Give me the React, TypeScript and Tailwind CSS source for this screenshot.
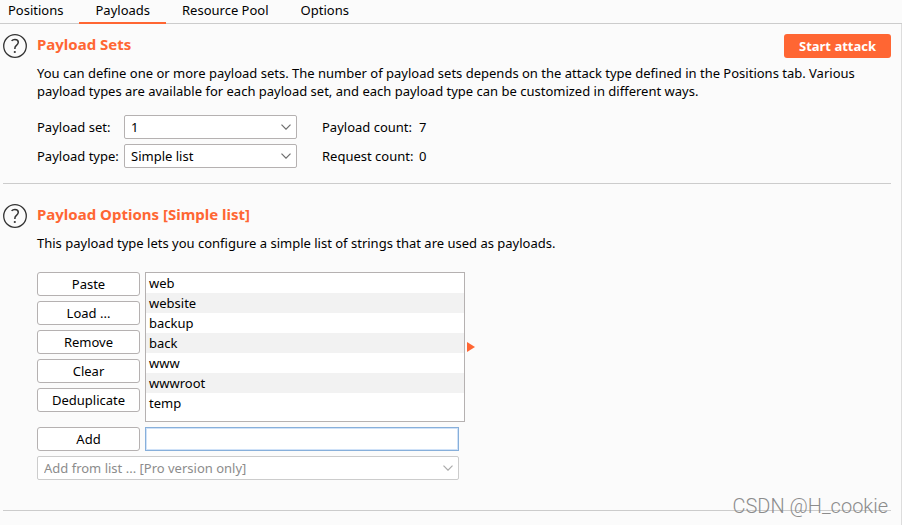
import { useState } from "react";
import type { ReactNode } from "react";

const tabs = ["Positions", "Payloads", "Resource Pool", "Options"];
const initialItems = ["web", "website", "backup", "back", "www", "wwwroot", "temp"];

function HelpButton({ label }: { label: string }) {
  return (
    <button type="button" aria-label={label} className="h-6 w-6 shrink-0">
      <svg viewBox="0 0 24 24" className="h-6 w-6" fill="none" stroke="#333333">
        <circle cx="12" cy="12" r="11.3" strokeWidth="1.3" />
        <path
          d="M8.6 6.9c.8-1 2-1.5 3.3-1.5 2 0 3.4 1.1 3.4 2.9 0 1.4-.7 2.1-1.8 3-1 .8-1.6 1.5-1.6 2.8v.9"
          strokeWidth="1.5"
        />
        <circle cx="11.8" cy="18" r="1.1" fill="#333333" stroke="none" />
      </svg>
    </button>
  );
}

interface SelectBoxProps {
  id?: string;
  label?: string;
  options: string[];
  disabled?: boolean;
}

function SelectBox({ id, label, options, disabled }: SelectBoxProps) {
  return (
    <div className="relative w-full">
      <select
        id={id}
        aria-label={label}
        disabled={disabled}
        className={`block h-6 w-full appearance-none rounded-xs border bg-white pl-1.5 pr-6 leading-5 ${
          disabled ? "border-[#cccccc] text-[#8c8c8c] opacity-100" : "border-[#b5b1b1] text-black"
        }`}
      >
        {options.map((option) => (
          <option key={option}>{option}</option>
        ))}
      </select>
      <svg
        viewBox="0 0 10 6"
        className="pointer-events-none absolute right-1.5 top-[9px] h-1.5 w-2.5"
        fill="none"
        stroke={disabled ? "#aaaaaa" : "#6e6e6e"}
        strokeWidth="1.2"
      >
        <path d="M0.5 0.7L5 5.2l4.5-4.5" />
      </svg>
    </div>
  );
}

function ListButton({ children }: { children: ReactNode }) {
  return (
    <button
      type="button"
      className="h-6 w-full rounded-[3px] border border-[#b5b1b1] bg-white leading-5 hover:bg-gray-50"
    >
      {children}
    </button>
  );
}

export default function App() {
  const [activeTab, setActiveTab] = useState("Payloads");
  const [newItem, setNewItem] = useState("");

  return (
    <div className="relative min-h-screen bg-[#fbfbfb] font-['Noto_Sans','Open_Sans',sans-serif] text-[13px] leading-[18px] text-black">
      <nav className="flex h-6 border-b border-[#cccccc]">
        {tabs.map((tab) => (
          <button
            key={tab}
            type="button"
            onClick={() => setActiveTab(tab)}
            className={`-mb-px h-6 border-b-2 px-4 pb-0.5 first:pl-2 ${
              activeTab === tab ? "border-[#ff6633]" : "border-transparent"
            }`}
          >
            {tab}
          </button>
        ))}
      </nav>

      <main className="min-h-[calc(100vh-24px)] border-r border-[#dddddd] pl-[3px] pr-2.5">
        {/* Payload sets */}
        <section className="flex gap-2.5 border-b border-[#cccccc] pb-[15px] pt-2.5">
          <HelpButton label="Help for payload sets" />
          <div className="grow">
            <div className="flex items-start justify-between">
              <h2 className="text-[15px] font-bold leading-5 text-[#ff6633]">Payload Sets</h2>
              <button
                type="button"
                className="h-6 w-[107px] rounded-[3px] bg-[#ff6633] font-bold text-white"
              >
                Start attack
              </button>
            </div>
            <p className="mt-1.5">
              You can define one or more payload sets. The number of payload sets depends on the
              attack type defined in the Positions tab. Various payload types are available for each
              payload set, and each payload type can be customized in different ways.
            </p>
            <div className="mt-[15px] grid grid-cols-[87px_173px_122px_1fr] items-center gap-y-[5px]">
              <label htmlFor="payload-set">Payload set:</label>
              <SelectBox id="payload-set" options={["1"]} />
              <span className="pl-[25px]">Payload count:</span>
              <span>{initialItems.length}</span>
              <label htmlFor="payload-type">Payload type:</label>
              <SelectBox id="payload-type" options={["Simple list"]} />
              <span className="pl-[25px]">Request count:</span>
              <span>0</span>
            </div>
          </div>
        </section>

        {/* Payload options */}
        <section className="flex gap-2.5 border-b border-[#cccccc] pb-[30px] pt-5">
          <HelpButton label="Help for payload options" />
          <div className="grow">
            <h2 className="text-[15px] font-bold leading-5 text-[#ff6633]">
              Payload Options [Simple list]
            </h2>
            <p className="mt-2.5">
              This payload type lets you configure a simple list of strings that are used as
              payloads.
            </p>
            <div className="mt-5 flex gap-[5px]">
              <div className="flex w-[103px] flex-col gap-[5px]">
                <ListButton>Paste</ListButton>
                <ListButton>Load ...</ListButton>
                <ListButton>Remove</ListButton>
                <ListButton>Clear</ListButton>
                <ListButton>Deduplicate</ListButton>
              </div>
              <ul className="h-[150px] w-80 overflow-auto border border-[#b5b1b1] bg-white">
                {initialItems.map((item) => (
                  <li key={item} className="h-5 px-[3px] leading-5 even:bg-[#f2f2f2]">
                    {item}
                  </li>
                ))}
              </ul>
              <svg viewBox="0 0 8 10" className="-ml-[3px] h-2.5 w-2 self-center" fill="#ff6633">
                <path d="M0 0l8 5-8 5z" />
              </svg>
            </div>
            <div className="mt-[5px] flex w-[422px] gap-[5px]">
              <div className="w-[103px]">
                <ListButton>Add</ListButton>
              </div>
              <input
                type="text"
                aria-label="New item"
                value={newItem}
                onChange={(e) => setNewItem(e.target.value)}
                className="h-6 grow border border-[#87afda] bg-white px-1 inset-ring inset-ring-[#d0e2f8] outline-none"
              />
            </div>
            <div className="mt-[5px] w-[422px]">
              <SelectBox
                label="Add from list"
                options={["Add from list ... [Pro version only]"]}
                disabled
              />
            </div>
          </div>
        </section>
      </main>

      <span className="absolute bottom-[7px] right-3.5 font-[Roboto,sans-serif] text-[20px] font-light leading-6 text-[#8c8c8c]">
        CSDN @H_cookie
      </span>
    </div>
  );
}
